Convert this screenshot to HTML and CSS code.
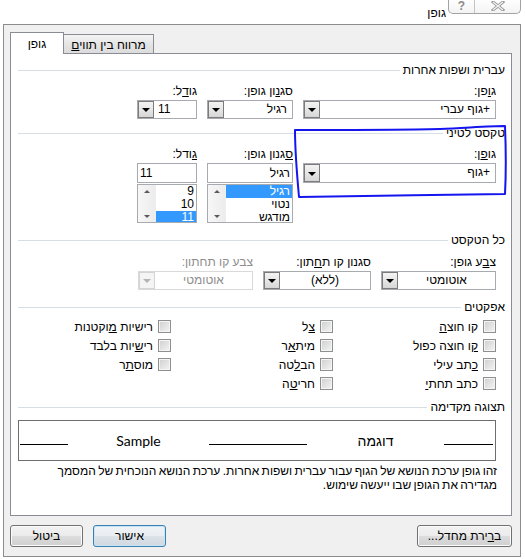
FILE: index.html
```html
<!DOCTYPE html>
<html lang="he">
<head>
<meta charset="utf-8">
<title>גופן</title>
<link rel="stylesheet" href="styles.css">
</head>
<body>
<div class="screen">
  <div class="titlebar">
    <span class="title">גופן</span>
    <div class="capbtns">
      <span class="capbtn help">?</span>
      <span class="capbtn close">
        <svg width="14" height="10" viewBox="0 0 14 10"><path d="M2 1 L12 9 M12 1 L2 9" stroke="#9a9a9a" stroke-width="3" stroke-linecap="square"/><path d="M2 1 L12 9 M12 1 L2 9" stroke="#f4f4f4" stroke-width="1.2"/></svg>
      </span>
    </div>
  </div>

  <div class="dialog">
    <div class="tabs">
      <div class="tab active">גופ<u>ן</u></div>
      <div class="tab">מרווח בין תווי<u>ם</u></div>
    </div>

    <div class="panel" dir="rtl">
      <div class="group-title g1"><span>עברית ושפות אחרות</span></div>
      <div class="fields f1">
        <div class="field w-font">
          <label>ג<u>ו</u>פן:</label>
          <div class="combo"><span class="val">+גוף עברי</span><span class="ddb"></span></div>
        </div>
        <div class="field w-style">
          <label>סג<u>נ</u>ון גופן:</label>
          <div class="combo"><span class="val">רגיל</span><span class="ddb"></span></div>
        </div>
        <div class="field w-size">
          <label>גו<u>ד</u>ל:</label>
          <div class="combo"><span class="val num">11</span><span class="ddb"></span></div>
        </div>
      </div>

      <div class="group-title g2"><span>טקסט לטיני</span></div>
      <div class="fields f2">
        <div class="field w-font">
          <label>גו<u>פ</u>ן:</label>
          <div class="combo tall"><span class="val">+גוף</span><span class="ddb"></span></div>
        </div>
        <div class="field w-style">
          <label><u>ס</u>גנון גופן:</label>
          <div class="textbox"><span class="val">רגיל</span></div>
          <div class="listbox">
            <div class="items">
              <div class="item sel">רגיל</div>
              <div class="item">נטוי</div>
              <div class="item">מודגש</div>
            </div>
            <div class="scroll"><span class="up"></span><span class="down"></span></div>
          </div>
        </div>
        <div class="field w-size">
          <label><u>ג</u>ודל:</label>
          <div class="textbox"><span class="val num">11</span></div>
          <div class="listbox">
            <div class="items">
              <div class="item">9</div>
              <div class="item">10</div>
              <div class="item sel">11</div>
            </div>
            <div class="scroll"><span class="up"></span><span class="down"></span></div>
          </div>
        </div>
      </div>

      <div class="group-title g3"><span>כל הטקסט</span></div>
      <div class="fields f3">
        <div class="field w-color">
          <label>צ<u>ב</u>ע גופן:</label>
          <div class="combo"><span class="val center">אוטומטי</span><span class="ddb"></span></div>
        </div>
        <div class="field w-ustyle">
          <label>סגנון קו ת<u>ח</u>תון:</label>
          <div class="combo"><span class="val center">(ללא)</span><span class="ddb"></span></div>
        </div>
        <div class="field w-ucolor disabled">
          <label>צבע קו תחתון:</label>
          <div class="combo"><span class="val center">אוטומטי</span><span class="ddb"></span></div>
        </div>
      </div>

      <div class="group-title g4"><span>אפקטים</span></div>
      <div class="effects">
        <div class="chk"><span class="box"></span><span>קו חוצ<u>ה</u></span></div>
        <div class="chk"><span class="box"></span><span><u>צ</u>ל</span></div>
        <div class="chk"><span class="box"></span><span>רישיות <u>מ</u>וקטנות</span></div>
        <div class="chk"><span class="box"></span><span><u>ק</u>ו חוצה כפול</span></div>
        <div class="chk"><span class="box"></span><span>מית<u>א</u>ר</span></div>
        <div class="chk"><span class="box"></span><span>רי<u>ש</u>יות בלבד</span></div>
        <div class="chk"><span class="box"></span><span><u>כ</u>תב עילי</span></div>
        <div class="chk"><span class="box"></span><span>הב<u>ל</u>טה</span></div>
        <div class="chk"><span class="box"></span><span>מוס<u>ת</u>ר</span></div>
        <div class="chk"><span class="box"></span><span>כתב תחת<u>י</u></span></div>
        <div class="chk"><span class="box"></span><span>חרי<u>ט</u>ה</span></div>
      </div>

      <div class="group-title g5"><span>תצוגה מקדימה</span></div>
      <div class="preview" dir="ltr">
        <span class="rule r1"></span>
        <span class="sample s-en">Sample</span>
        <span class="rule r2"></span>
        <span class="sample s-he">דוגמה</span>
        <span class="rule r3"></span>
      </div>
      <p class="desc">זהו גופן ערכת הנושא של הגוף עבור עברית ושפות אחרות. ערכת הנושא הנוכחית של המסמך<br>מגדירה את הגופן שבו ייעשה שימוש.</p>
    </div>

    <div class="buttons">
      <button class="btn">ביטול</button>
      <button class="btn default">אישור</button>
      <button class="btn wide">ב<u>ר</u>ירת מחדל...</button>
    </div>
  </div>

  <svg class="annotation" width="525" height="559" viewBox="0 0 525 559">
    <path d="M295 130 C340 130 400 130 440 129 C465 128 490 126 505 126 C506 150 506 175 505 194 C440 195 360 196 299 197 C297 175 295 150 295 130 Z" fill="none" stroke="#1515f0" stroke-width="2" stroke-linejoin="round"/>
  </svg>
</div>
</body>
</html>
```

FILE: styles.css
```css
* { box-sizing: border-box; }

html, body {
  margin: 0;
  padding: 0;
  background: #ffffff;
}

body {
  font-family: "Liberation Sans", "DejaVu Sans", sans-serif;
  font-size: 12px;
  color: #000;
}

u { text-decoration: underline; text-underline-offset: 1px; }

.screen {
  position: relative;
  width: 525px;
  height: 559px;
  overflow: hidden;
}

/* ---------- title bar ---------- */
.titlebar {
  height: 24px;
  display: flex;
  justify-content: flex-end;
  align-items: flex-start;
  padding-right: 4px;
}

.title {
  line-height: 14px;
  margin-top: 6px;
  margin-right: 2px;
}

.capbtns {
  display: flex;
  height: 15px;
  margin-top: -1px;
  border: 1px solid #a3a3a3;
  border-top: none;
  border-radius: 0 0 5px 5px;
  background: linear-gradient(#ffffff, #f3f3f3);
}

.capbtn {
  display: flex;
  align-items: center;
  justify-content: center;
  height: 14px;
}

.help {
  width: 26px;
  border-right: 1px solid #c4c4c4;
  color: #8a8a8a;
  font-size: 12px;
  font-weight: bold;
}

.close { width: 45px; }

/* ---------- dialog ---------- */
.dialog {
  margin-left: 3px;
  width: 518px;
  height: 533px;
  border: 1px solid #8c8c8c;
  background: #f0f0f0;
  padding: 7px 8px 0 6px;
}

.tabs {
  display: flex;
  align-items: flex-end;
  height: 21px;
}

.tab {
  border: 1px solid #898c95;
  border-bottom: none;
  text-align: center;
  white-space: nowrap;
}

.tab.active {
  position: relative;
  z-index: 1;
  width: 54px;
  height: 22px;
  margin-bottom: -1px;
  background: #ffffff;
  line-height: 20px;
  padding-top: 1px;
}

.tab:not(.active) {
  width: 90px;
  height: 19px;
  border-left: none;
  background: linear-gradient(#f4f4f4, #e4e4e4 55%, #dcdcdc);
  line-height: 18px;
  padding-top: 1px;
}

.panel {
  width: 502px;
  height: 463px;
  border: 1px solid #898c95;
  background: #ffffff;
}

/* ---------- group titles ---------- */
.group-title {
  display: flex;
  align-items: center;
  gap: 3px;
  height: 14px;
  line-height: 14px;
  margin-right: 6px;
  margin-left: 7px;
  white-space: nowrap;
}

.group-title::after {
  content: "";
  flex: 1;
  border-top: 1px solid #d5dfe5;
  margin-top: 1px;
}

.g1 { margin-top: 9px; }
.g2 { margin-top: 7px; }
.g3 { margin-top: 10px; }
.g4 { margin-top: 10px; }
.g5 { margin-top: 7px; }

/* ---------- fields ---------- */
.fields {
  display: flex;
  gap: 10px;
  margin-right: 15px;
}

.f1 { margin-top: 7px; }
.f2 { margin-top: 7px; }
.f3 { margin-top: 8px; }

.field {
  display: flex;
  flex-direction: column;
}

.field label {
  height: 14px;
  line-height: 14px;
  margin-bottom: 2px;
  white-space: nowrap;
}

.w-font { width: 193px; }
.w-style { width: 86px; }
.w-size { width: 60px; }
.w-color { width: 115px; }
.w-ustyle { width: 108px; }
.w-ucolor { width: 115px; }

.combo, .textbox {
  display: flex;
  height: 19px;
  border: 1px solid #a7abb0;
  background: #ffffff;
}

.combo.tall, .textbox { height: 20px; }

.val {
  flex: 1;
  line-height: 17px;
  padding-right: 5px;
  text-align: right;
  white-space: nowrap;
}

.textbox .val { line-height: 18px; padding-right: 2px; }

.val.num {
  direction: ltr;
  text-align: left;
  padding-right: 0;
  padding-left: 4px;
}

.textbox .val.num { padding-left: 2px; }

.val.center { text-align: center; padding-right: 0; }

.ddb {
  width: 16px;
  border: 1px solid #7b7b7b;
  background: linear-gradient(#f3f3f3, #e6e6e6 50%, #d6d6d6);
  display: flex;
  align-items: center;
  justify-content: center;
}

.ddb::after {
  content: "";
  width: 0;
  height: 0;
  border-left: 4px solid transparent;
  border-right: 4px solid transparent;
  border-top: 4px solid #000;
  margin-top: 1px;
}

.disabled { color: #8d8d8d; }
.disabled .combo { border-color: #d9d9d9; }
.disabled .ddb { border-color: #d4d4d4; background: #f4f4f4; }
.disabled .ddb::after { border-top-color: #b3b3b3; }

/* ---------- list boxes ---------- */
.listbox {
  display: flex;
  margin-top: 1px;
  height: 39px;
  border: 1px solid #a7abb0;
  background: #ffffff;
  overflow: hidden;
}

.items { flex: 1; }

.item {
  height: 13px;
  line-height: 13px;
  padding-right: 2px;
  text-align: right;
  white-space: nowrap;
}

.item.sel {
  background: #3399ff;
  color: #ffffff;
}

.scroll {
  width: 18px;
  background: linear-gradient(to right, #f7f7f7, #ececec);
  border-right: 1px solid #eeeeee;
  display: flex;
  flex-direction: column;
  justify-content: space-between;
  align-items: center;
  padding: 5px 0 4px;
}

.scroll span {
  width: 0;
  height: 0;
  border-left: 3px solid transparent;
  border-right: 3px solid transparent;
}

.scroll .up { border-bottom: 3px solid #5a5a5a; }
.scroll .down { border-top: 3px solid #5a5a5a; }

/* ---------- effects ---------- */
.effects {
  display: grid;
  grid-template-columns: 163px 162px 1fr;
  grid-auto-rows: 19px;
  margin-top: 3px;
  margin-right: 15px;
}

.chk {
  display: flex;
  align-items: center;
  gap: 5px;
  white-space: nowrap;
}

.box {
  width: 13px;
  height: 13px;
  border: 1px solid #8e8f8f;
  background: linear-gradient(135deg, #cfcfcf, #f4f4f4);
  box-shadow: inset 0 0 0 1px #f4f4f4;
  flex: none;
}

/* ---------- preview ---------- */
.preview {
  display: flex;
  align-items: flex-start;
  height: 41px;
  margin-top: 6px;
  margin-left: 7px;
  margin-right: 15px;
  border: 1px solid #6e6e6e;
  padding-left: 1px;
}

.rule {
  height: 24px;
  border-bottom: 1px solid #000;
}

.r1 { width: 48px; }
.r2 { width: 98px; }
.r3 { width: 49px; }

.sample {
  height: 24px;
  padding-top: 12px;
  line-height: 16px;
  text-align: center;
  white-space: nowrap;
}

.s-en {
  width: 141px;
  font-family: "Lato", "Open Sans", sans-serif;
  font-size: 14px;
}

.s-he {
  width: 137px;
  font-family: "Liberation Sans", "DejaVu Sans", sans-serif;
  font-size: 14px;
}

.desc {
  margin: 3px 14px 0 0;
  line-height: 14px;
  white-space: nowrap;
  word-spacing: -1px;
}

/* ---------- buttons ---------- */
.buttons {
  display: flex;
  margin-top: 9px;
  direction: ltr;
}

.btn {
  width: 73px;
  height: 22px;
  font-family: inherit;
  font-size: 12px;
  color: #000;
  border: 1px solid #707070;
  border-radius: 3px;
  background: linear-gradient(#f2f2f2, #ebebeb 50%, #dddddd 50%, #cfcfcf);
  box-shadow: inset 0 0 0 1px #fcfcfc;
  padding: 0;
  direction: rtl;
}

.btn + .btn { margin-left: 10px; }

.btn.default {
  border-color: #3c7fb1;
  box-shadow: inset 0 0 0 1px #c6e6f8;
  background: linear-gradient(#f0f3f6, #e8edf1 50%, #dce3e9 50%, #d0d8e0);
}

.btn.wide {
  width: 95px;
  margin-left: auto;
}

/* ---------- annotation (hand-drawn highlight over content) ---------- */
.annotation {
  position: absolute;
  left: 0;
  top: 0;
  pointer-events: none;
}
```
